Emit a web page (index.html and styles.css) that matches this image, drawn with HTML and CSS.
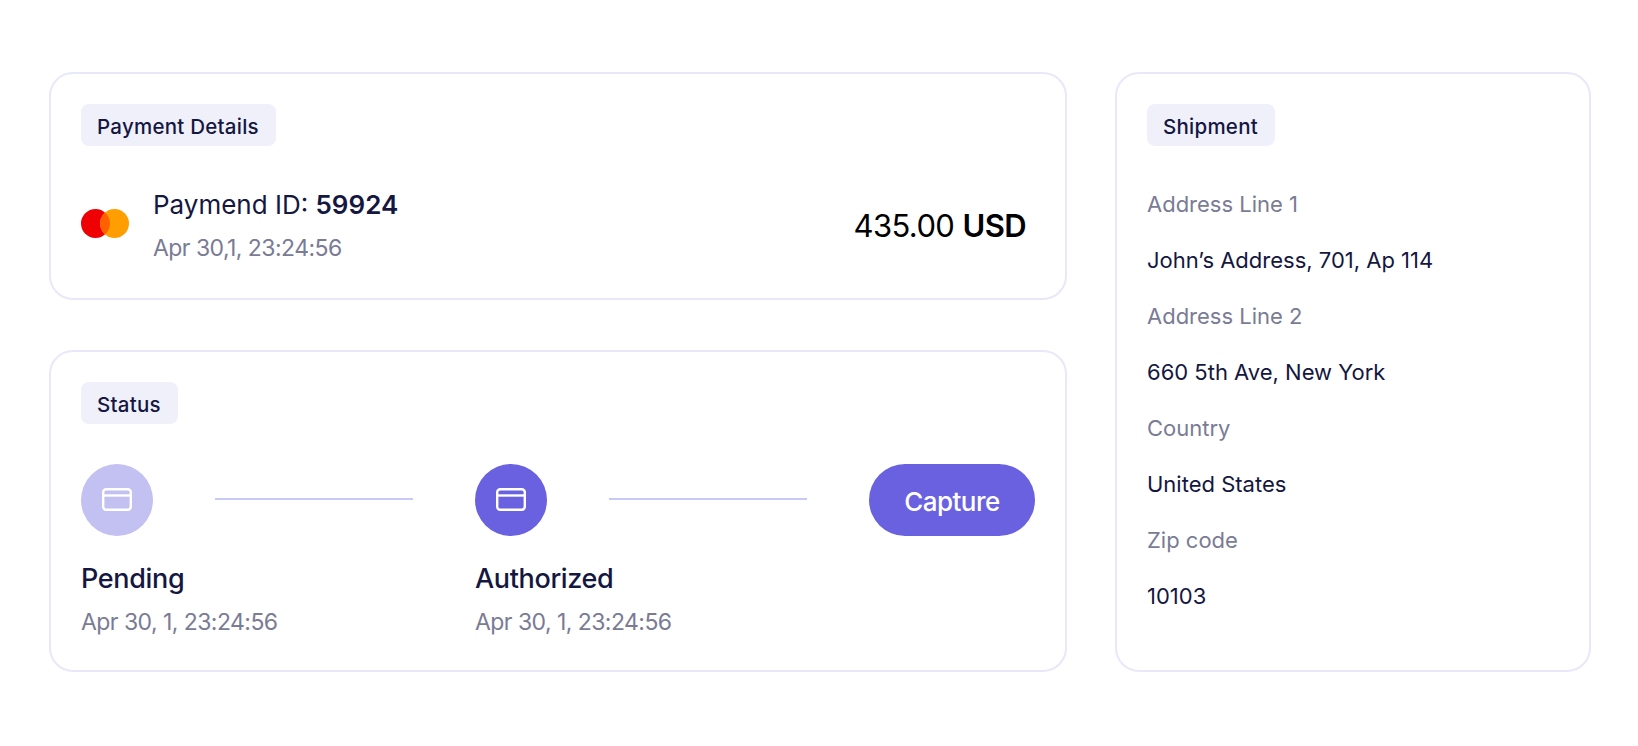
FILE: index.html
```html
<!DOCTYPE html>
<html>
<head>
    <title>Payment</title>
    <link rel="stylesheet" href="styles.css">
</head>
<body>
    <div class="page">
        <div class="main">
            <div class="card">
                <span class="tag">Payment Details</span>
                <div class="payment">
                    <svg class="brand" width="48" height="29" viewBox="0 0 48 29">
                        <circle cx="14.5" cy="14.5" r="14.5" fill="#ee0005"/>
                        <circle cx="33.5" cy="14.5" r="14.5" fill="#ff9e00"/>
                        <path d="M24 3.6a14.5 14.5 0 0 1 0 21.8a14.5 14.5 0 0 1 0-21.8z" fill="#ff6000"/>
                    </svg>
                    <div class="payment-info">
                        <div class="payment-id">Paymend ID: <strong>59924</strong></div>
                        <div class="muted">Apr 30,1, 23:24:56</div>
                    </div>
                    <div class="amount">435.00 <strong>USD</strong></div>
                </div>
            </div>

            <div class="card">
                <span class="tag">Status</span>
                <div class="steps">
                    <div class="step-icon step-icon-light">
                        <svg class="card-icon" width="30" height="23" viewBox="0 0 30 23" fill="none" stroke="#fff" stroke-width="2.4">
                            <rect x="1.2" y="1.2" width="27.6" height="20.6" rx="3"/>
                            <path d="M1 7.5h28"/>
                        </svg>
                    </div>
                    <div class="step-line"></div>
                    <div class="step-icon">
                        <svg class="card-icon" width="30" height="23" viewBox="0 0 30 23" fill="none" stroke="#fff" stroke-width="2.4">
                            <rect x="1.2" y="1.2" width="27.6" height="20.6" rx="3"/>
                            <path d="M1 7.5h28"/>
                        </svg>
                    </div>
                    <div class="step-line"></div>
                    <button class="capture">Capture</button>
                </div>
                <div class="step-labels">
                    <div>
                        <div class="step-name">Pending</div>
                        <div class="muted">Apr 30, 1, 23:24:56</div>
                    </div>
                    <div>
                        <div class="step-name">Authorized</div>
                        <div class="muted">Apr 30, 1, 23:24:56</div>
                    </div>
                </div>
            </div>
        </div>

        <div class="card shipment">
            <span class="tag">Shipment</span>
            <div class="fields">
                <div class="muted">Address Line 1</div>
                <div>John’s Address, 701, Ap 114</div>
                <div class="muted">Address Line 2</div>
                <div>660 5th Ave, New York</div>
                <div class="muted">Country</div>
                <div>United States</div>
                <div class="muted">Zip code</div>
                <div>10103</div>
            </div>
        </div>
    </div>
</body>
</html>
```

FILE: styles.css
```css
body { margin: 0; background: #fff; color: #14173f; font-family: Inter, "Liberation Sans", sans-serif; }
.page { display: flex; gap: 48px; padding: 72px 47px 0 49px; }
.main { width: 1018px; display: flex; flex-direction: column; gap: 50px; }
.card { border: 2px solid #e8e8fa; border-radius: 24px; padding: 30px; box-sizing: border-box; }
.tag { display: inline-block; height: 42px; line-height: 45px; padding: 0 17px 0 16px; background: #f0f0fb; border-radius: 8px; font-size: 20.5px; font-weight: 500; letter-spacing: 0.25px; vertical-align: top; }
.muted { color: #7a7b94; }
.payment { display: flex; align-items: center; margin-top: 40px; height: 82px; }
.brand { margin: 0 24px 7px 0; }
.payment-info { margin-bottom: 2px; }
.payment-id { font-size: 26px; line-height: 36px; margin-bottom: 7px; }
.payment-id strong { font-weight: 600; }
.payment-info .muted { font-size: 23px; line-height: 36px; letter-spacing: -0.55px; }
.amount { font-size: 31px; color: #000; letter-spacing: -0.6px; margin: 0 9px 4px auto; }
.amount strong { font-weight: 600; }
.steps { display: flex; align-items: center; margin-top: 40px; }
.step-icon { width: 72px; height: 72px; border-radius: 50%; background: #6961e0; display: flex; align-items: center; justify-content: center; }
.step-icon-light { background: #c3c0f2; }
.card-icon { margin: 0 1px 1px 0; }
.step-line { width: 198px; height: 2px; margin: 0 62px 2px; background: #c9c9f9; }
.capture { width: 166px; height: 72px; padding-top: 3px; border: none; border-radius: 36px; background: #6961e0; color: #fff; font-family: inherit; font-size: 26px; font-weight: 500; letter-spacing: -0.55px; }
.step-labels { display: grid; grid-template-columns: 394px 394px; margin-top: 24px; }
.step-name { font-size: 27px; line-height: 38px; font-weight: 500; letter-spacing: -0.35px; }
.step-labels .muted { font-size: 23px; line-height: 36px; margin-top: 6px; letter-spacing: -0.55px; }
.shipment { width: 476px; }
.fields { margin-top: 30px; font-size: 22px; line-height: 56px; }
```
